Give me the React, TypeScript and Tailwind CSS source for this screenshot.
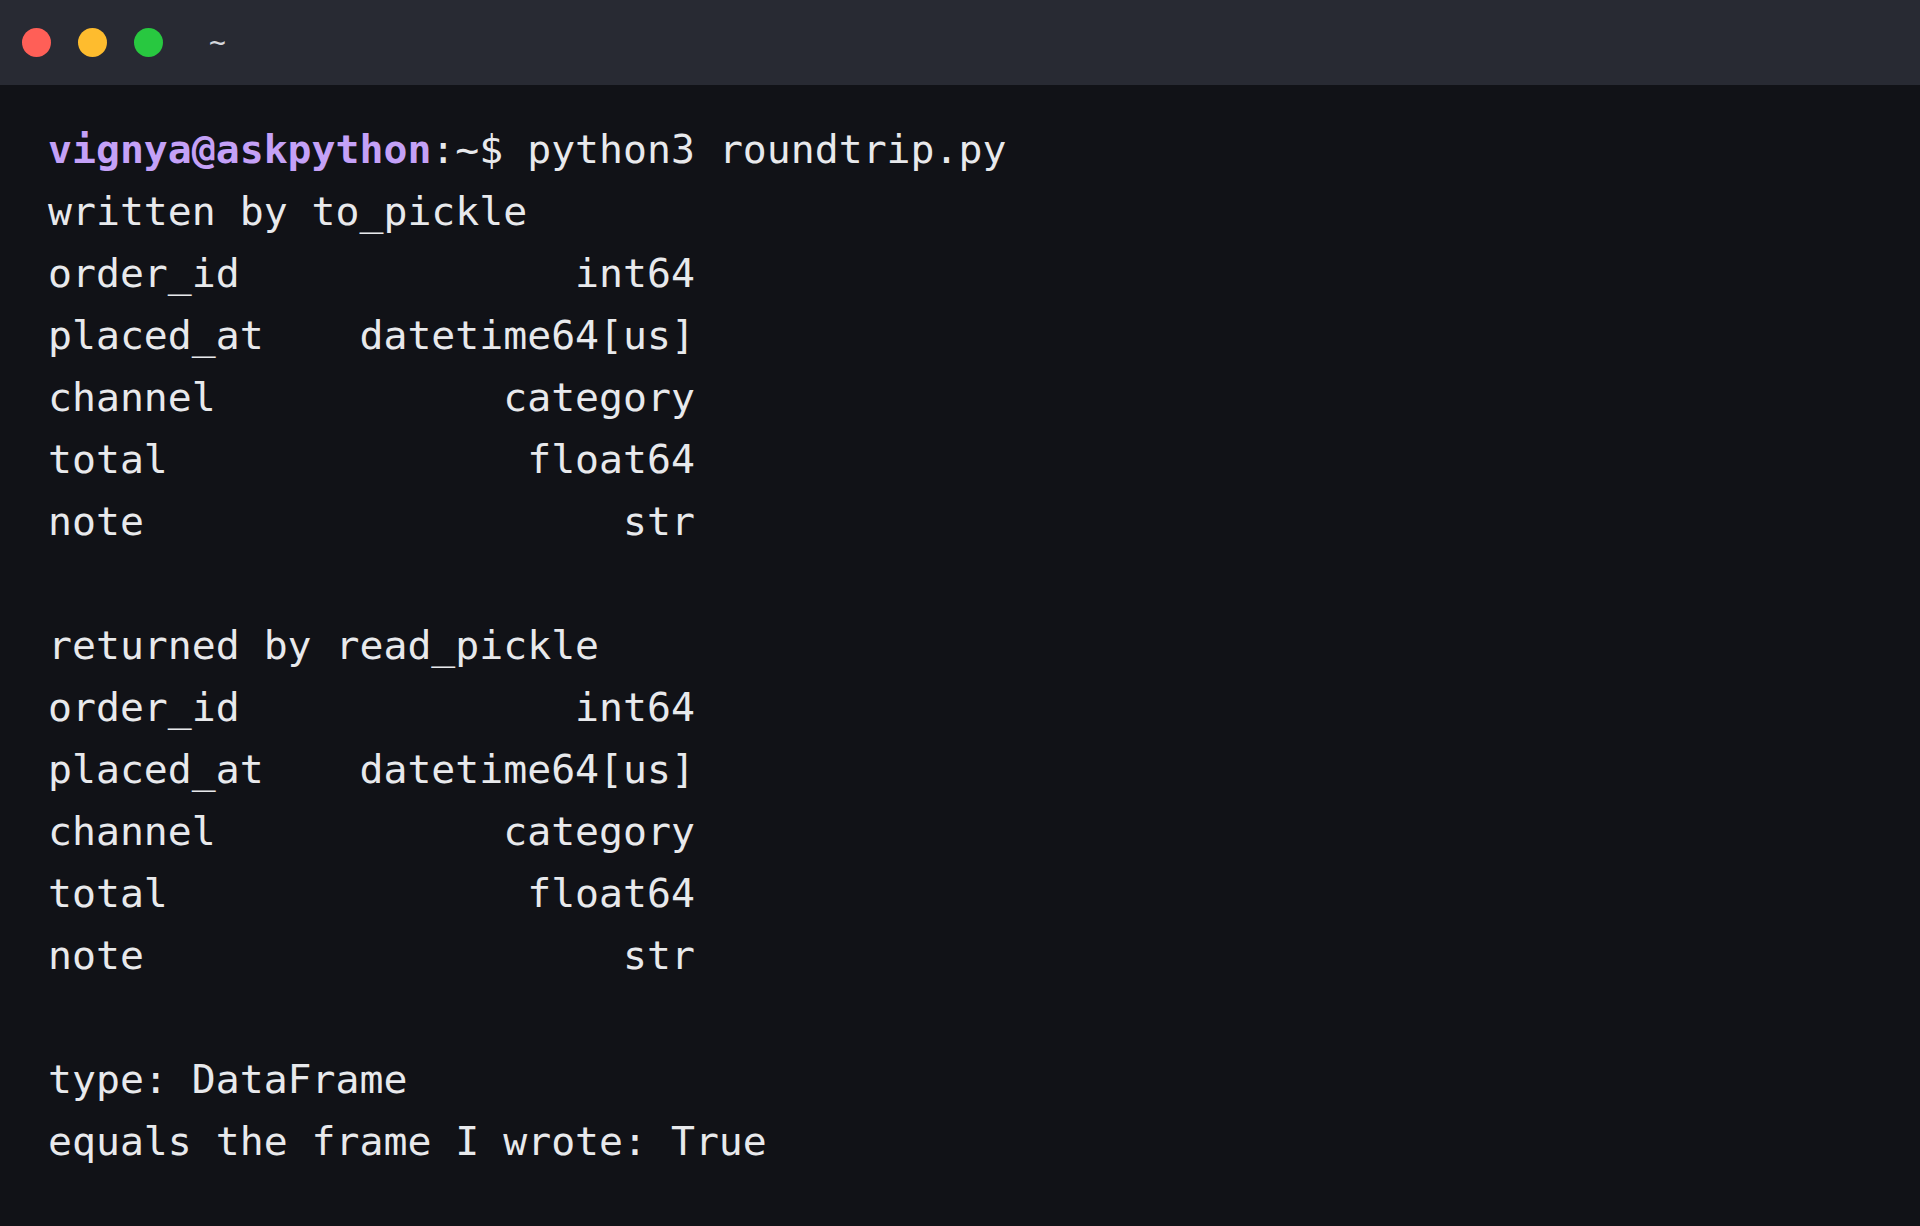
import React from "react";

const pad = (a: string, b: string) => a + " ".repeat(27 - a.length - b.length) + b;

const rows: [string, string][] = [
  ["order_id", "int64"],
  ["placed_at", "datetime64[us]"],
  ["channel", "category"],
  ["total", "float64"],
  ["note", "str"],
];

export default function App() {
  return (
    <div className="w-full h-[1226px] flex flex-col bg-[#111217] overflow-hidden">
      <div className="h-[85px] shrink-0 bg-[#282a33] flex items-center pl-[22px]">
        <div className="flex items-center gap-[27px]">
          <span className="w-[29px] h-[29px] rounded-full bg-[#ff5f57]" />
          <span className="w-[29px] h-[29px] rounded-full bg-[#febc2e]" />
          <span className="w-[29px] h-[29px] rounded-full bg-[#28c840]" />
        </div>
        <span className="ml-[46px] text-[28px] text-[#d4d6db] leading-none" style={{ fontFamily: '"DejaVu Sans Mono", monospace' }}>~</span>
      </div>
      <div
        className="pt-[33px] pl-[48px] text-[39.8px] leading-[62px] text-[#e8e9ec] whitespace-pre"
        style={{ fontFamily: '"DejaVu Sans Mono", "Liberation Mono", monospace' }}
      >
        <div>
          <span className="font-bold text-[#c4a1f7]">vignya@askpython</span>
          <span>:~$ python3 roundtrip.py</span>
        </div>
        <div>written by to_pickle</div>
        {rows.map(([a, b]) => (
          <div key={"w" + a}>{pad(a, b)}</div>
        ))}
        <div>&nbsp;</div>
        <div>returned by read_pickle</div>
        {rows.map(([a, b]) => (
          <div key={"r" + a}>{pad(a, b)}</div>
        ))}
        <div>&nbsp;</div>
        <div>type: DataFrame</div>
        <div>equals the frame I wrote: True</div>
      </div>
    </div>
  );
}
